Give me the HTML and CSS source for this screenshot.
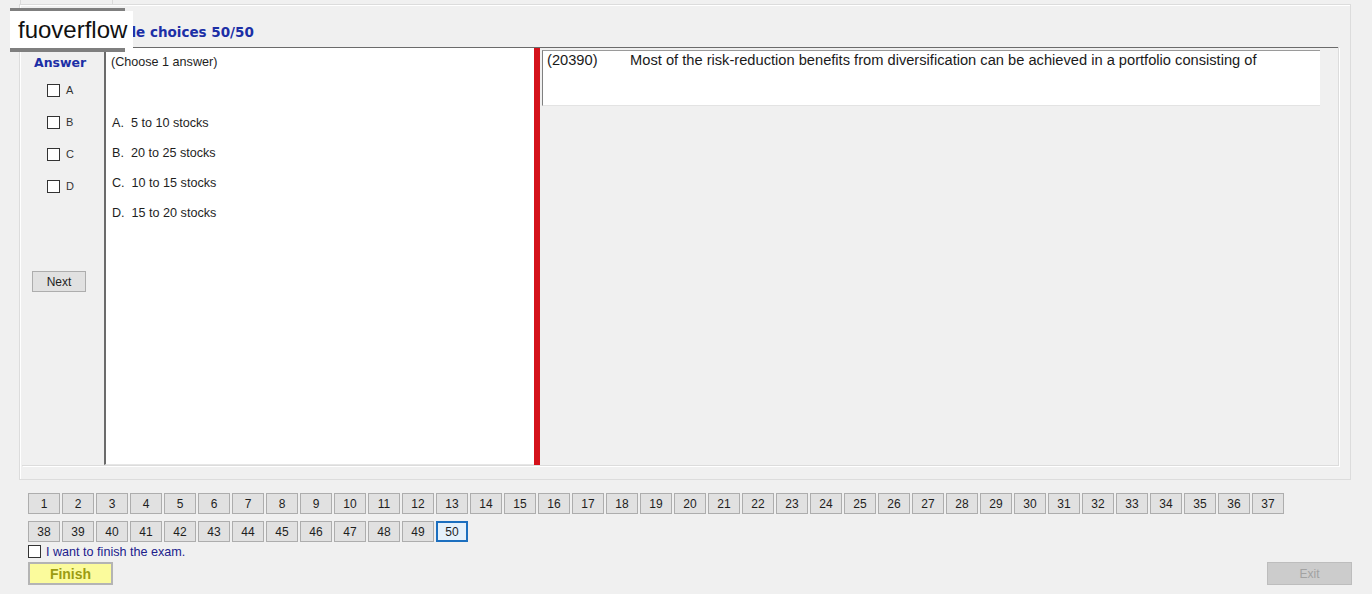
FILE: index.html
```html
<!DOCTYPE html>
<html lang="en">
<head>
    <meta charset="UTF-8">
    <meta name="viewport" content="width=device-width, initial-scale=1.0">
    <title>Exam</title>
    <link rel="stylesheet" href="styles.css">
</head>
<body>
    <div class="tab-stub"></div>

    <div class="group-outer">
        <div class="group-title">Multiple choices 50/50</div>

        <div class="group-inner">
            <div class="answer-col">
                <div class="answer-head">Answer</div>
                <label class="answer-opt"><input type="checkbox"> A</label>
                <label class="answer-opt"><input type="checkbox"> B</label>
                <label class="answer-opt"><input type="checkbox"> C</label>
                <label class="answer-opt"><input type="checkbox"> D</label>
                <button class="btn next-btn" type="button">Next</button>
            </div>

            <div class="panes">
                <div class="choices">
                    <div class="choose-hint">(Choose 1 answer)</div>
                    <div class="choice">A.&nbsp; 5 to 10 stocks</div>
                    <div class="choice">B.&nbsp; 20 to 25 stocks</div>
                    <div class="choice">C.&nbsp; 10 to 15 stocks</div>
                    <div class="choice">D.&nbsp; 15 to 20 stocks</div>
                </div>
                <div class="splitter"></div>
                <div class="question-pane">
                    <div class="question">
                        <span class="q-id">(20390)</span>
                        <span>Most of the risk-reduction benefits from diversification can be achieved in a portfolio consisting of</span>
                    </div>
                </div>
            </div>
        </div>
    </div>

    <div class="nav">
        <div class="nav-row" id="row1"></div>
        <div class="nav-row" id="row2"></div>
    </div>

    <label class="finish-check"><input type="checkbox"> I want to finish the exam.</label>

    <div class="bottom-bar">
        <button class="btn finish-btn" type="button">Finish</button>
        <button class="btn exit-btn" type="button" disabled>Exit</button>
    </div>

    <div class="watermark">
        <div class="watermark-label">fuoverflow</div>
    </div>

    <script>
        // question number buttons, 37 on the first row
        var row1 = document.getElementById('row1');
        var row2 = document.getElementById('row2');
        for (var i = 1; i <= 50; i++) {
            var b = document.createElement('button');
            b.type = 'button';
            b.className = 'btn num-btn' + (i === 50 ? ' current' : '');
            b.textContent = i;
            (i <= 37 ? row1 : row2).appendChild(b);
        }
    </script>
</body>
</html>
```

FILE: styles.css
```css
body {
    margin: 0;
    background: #f0f0f0;
    font-family: "Liberation Sans", Arial, sans-serif;
    font-size: 12px;
    color: #1e1e1e;
    position: relative;
    height: 594px;
    overflow: hidden;
}
.btn {
    font-family: "Liberation Sans", Arial, sans-serif;
    font-size: 12px;
    color: #1e1e1e;
    background: #e1e1e1;
    border: 1px solid #adadad;
    padding: 0;
    margin: 0;
}
input[type=checkbox] {
    appearance: none;
    -webkit-appearance: none;
    width: 13px;
    height: 13px;
    margin: 0;
    border: 1px solid #333;
    background: #fff;
    flex: none;
}

.tab-stub {
    margin-left: 20px;
    width: 91px;
    height: 4px;
    border-left: 1px solid #dadada;
    border-right: 1px solid #dadada;
}

/* outer group box */
.group-outer {
    margin-left: 19px;
    width: 1330px;
    height: 474px;
    border: 1px solid #dcdcdc;
    box-shadow: inset 1px 1px 0 #fff;
}
.group-title {
    height: 42px;
    box-sizing: border-box;
    padding: 19px 0 0 63px;
    font-family: "DejaVu Sans", Verdana, sans-serif;
    font-size: 13.5px;
    font-weight: bold;
    color: #1c2fa6;
}
.group-inner {
    display: flex;
    margin-left: 2px;
    width: 1316px;
    height: 418px;
    border-right: 1px solid #dcdcdc;
    border-bottom: 1px solid #dcdcdc;
    box-shadow: 1px 1px 0 #fff;
}

/* answer column */
.answer-col {
    width: 82px;
    flex: none;
    display: flex;
    flex-direction: column;
}
.answer-head {
    margin: 8px 0 0 12px;
    height: 19px;
    font-family: "DejaVu Sans", Verdana, sans-serif;
    font-size: 12.5px;
    font-weight: bold;
    color: #1c2fa6;
}
.answer-opt {
    display: flex;
    align-items: center;
    gap: 6px;
    margin-left: 25px;
    height: 32px;
    font-size: 11px;
    color: #333;
}
.next-btn {
    margin: 69px 0 0 10px;
    width: 54px;
    height: 21px;
}

/* panes */
.panes {
    flex: 1;
    display: flex;
    border-top: 1px solid #6b6b6b;
}
.choices {
    width: 430px;
    flex: none;
    background: #fff;
    border-left: 2px solid #6b6b6b;
    border-bottom: 1px solid #e6e6e6;
    padding: 7px 0 0 5px;
    box-sizing: border-box;
    font-size: 12.6px;
}
.choose-hint {
    height: 61px;
}
.choice {
    height: 30px;
    padding-left: 1px;
}
.splitter {
    width: 6px;
    flex: none;
    background: #d4121b;
}
.question-pane {
    flex: 1;
    padding: 2px 0 0 2px;
}
.question {
    width: 778px;
    height: 56px;
    box-sizing: border-box;
    background: #fff;
    border-left: 1px solid #808080;
    border-top: 1px solid #9a9a9a;
    border-bottom: 1px solid #e3e3e3;
    padding: 1px 0 0 4px;
    font-size: 11pt;
    color: #1a1a1a;
}
.q-id {
    display: inline-block;
    width: 79px;
}

/* question number buttons */
.nav {
    margin: 13px 0 0 28px;
    display: flex;
    flex-direction: column;
    gap: 7px;
}
.nav-row {
    display: flex;
    gap: 2px;
    height: 21px;
}
.num-btn {
    width: 32px;
    height: 21px;
}
.num-btn.current {
    border: 2px solid #1c6fbf;
    background: #e5f1fb;
}

.finish-check {
    display: flex;
    align-items: center;
    gap: 5px;
    margin: 2px 0 0 28px;
    height: 15px;
    font-size: 12.6px;
    color: #20208c;
}

.bottom-bar {
    display: flex;
    justify-content: space-between;
    margin: 3px 20px 0 28px;
}
.finish-btn {
    width: 85px;
    height: 23px;
    background: #fbfb9c;
    border: 2px solid #b4b4b4;
    font-size: 14px;
    font-weight: bold;
    color: #9c9c12;
}
.exit-btn {
    width: 85px;
    height: 23px;
    background: #cccccc;
    border: 1px solid #bdbdbd;
    color: #a2a2a2;
}

/* watermark over the title */
.watermark {
    position: absolute;
    left: 10px;
    top: 8px;
    width: 115px;
    height: 44px;
    background: #7f7f7f;
}
.watermark-label {
    position: absolute;
    left: 0;
    top: 3px;
    width: 115px;
    height: 35px;
    padding: 2px 0 0 8px;
    box-sizing: content-box;
    background: #fff;
    font-size: 24px;
    line-height: 33px;
    color: #111;
}
```
